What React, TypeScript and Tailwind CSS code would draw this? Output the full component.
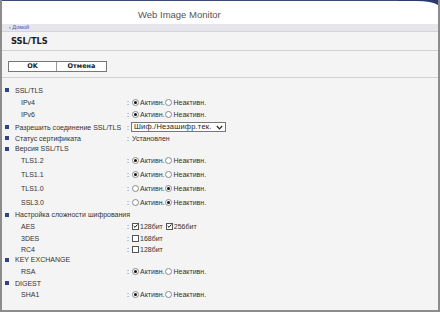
import React from "react";

type Row =
  | { kind: "section"; label: string; h: number }
  | { kind: "radio"; label: string; h: number; on: boolean }
  | { kind: "select"; label: string; h: number }
  | { kind: "text"; label: string; h: number; value: string }
  | { kind: "check"; label: string; h: number; items: { t: string; on: boolean }[] };

const rows: Row[] = [
  { kind: "section", label: "SSL/TLS", h: 12 },
  { kind: "radio", label: "IPv4", h: 12, on: true },
  { kind: "radio", label: "IPv6", h: 13, on: true },
  { kind: "select", label: "Разрешить соединение SSL/TLS", h: 12 },
  { kind: "text", label: "Статус сертификата", h: 10, value: "Установлен" },
  { kind: "section", label: "Версия SSL/TLS", h: 11 },
  { kind: "radio", label: "TLS1.2", h: 13, on: true },
  { kind: "radio", label: "TLS1.1", h: 14, on: true },
  { kind: "radio", label: "TLS1.0", h: 14, on: false },
  { kind: "radio", label: "SSL3.0", h: 14, on: false },
  { kind: "section", label: "Настройка сложности шифрования", h: 11 },
  { kind: "check", label: "AES", h: 12, items: [{ t: "128бит", on: true }, { t: "256бит", on: true }] },
  { kind: "check", label: "3DES", h: 12, items: [{ t: "168бит", on: false }] },
  { kind: "check", label: "RC4", h: 10, items: [{ t: "128бит", on: false }] },
  { kind: "section", label: "KEY EXCHANGE", h: 11 },
  { kind: "radio", label: "RSA", h: 12, on: true },
  { kind: "section", label: "DIGEST", h: 12 },
  { kind: "radio", label: "SHA1", h: 11, on: true },
];

function Radio({ on }: { on: boolean }) {
  return (
    <span className="w-[7px] h-[7px] rounded-full border border-[#8a8a8a] bg-white flex items-center justify-center shrink-0">
      {on && <span className="w-[3px] h-[3px] rounded-full bg-[#111]" />}
    </span>
  );
}

function Check({ on }: { on: boolean }) {
  return (
    <span className="w-[7px] h-[7px] border border-[#555] bg-white flex items-center justify-center shrink-0">
      {on && (
        <svg width="6" height="6" viewBox="0 0 6 6">
          <path d="M0.8 3 L2.4 4.6 L5.3 1.2" stroke="#111" strokeWidth="1.2" fill="none" />
        </svg>
      )}
    </span>
  );
}

function Value({ row }: { row: Row }) {
  if (row.kind === "radio") {
    return (
      <div className="flex items-center">
        <Radio on={row.on} />
        <span className="ml-[1px]">Активн.</span>
        <span className="ml-[1px]" />
        <Radio on={!row.on} />
        <span className="ml-[1px]">Неактивн.</span>
      </div>
    );
  }
  if (row.kind === "select") {
    return (
      <div className="ml-[-1px] w-[95px] h-[10px] border border-[#777] bg-white flex items-center justify-between pl-[2px] pr-[2px] text-[7.5px] tracking-[0.2px] text-[#222]">
        <span>Шиф./Незашифр.тек.</span>
        <svg width="7" height="5" viewBox="0 0 7 5">
          <path d="M0.8 1 L3.5 3.8 L6.2 1" stroke="#222" strokeWidth="1.2" fill="none" />
        </svg>
      </div>
    );
  }
  if (row.kind === "text") {
    return <span>{row.value}</span>;
  }
  if (row.kind === "check") {
    return (
      <div className="flex items-center gap-[3px]">
        {row.items.map((it, i) => (
          <div key={i} className="flex items-center gap-[1px]">
            <Check on={it.on} />
            <span>{it.t}</span>
          </div>
        ))}
      </div>
    );
  }
  return null;
}

export default function App() {
  return (
    <div
      className="w-[440px] h-[312px] bg-[#f4f4f4] border-l-2 border-r-2 border-b-2 border-[#8c8c8c] text-[#333] overflow-hidden relative"
      style={{ fontFamily: '"Liberation Sans", Arial, sans-serif' }}
    >
      <svg className="absolute top-0 right-0" width="40" height="6" viewBox="0 0 40 6">
        <path d="M0 0 L40 0 L40 5 Q34 1 18 1 L0 1 Z" fill="#2b3a6e" />
      </svg>
      <div className="h-[24px] bg-white border-t border-[#3d4b78] flex items-center pl-[136px]">
        <span className="text-[9.5px] text-[#555] mt-[5px]">Web Image Monitor</span>
      </div>
      <div className="h-[8px] bg-[#e5e5eb] border-b border-[#d4d4da] flex items-center pl-[7px] text-[5.5px] text-[#3a5bb0] leading-none">
        ‹ Домой
      </div>
      <div className="h-[19px] border-b border-[#d2d2d2] flex items-center pl-[9px]">
        <span className="text-[8.3px] font-bold text-[#222]" style={{ fontFamily: '"DejaVu Sans", Verdana, sans-serif' }}>
          SSL/TLS
        </span>
      </div>
      <div className="h-[27px] border-b border-[#d2d2d2] flex items-center pl-[6px] pt-[5px]">
        <div className="flex h-[11px] border border-[#777] bg-white text-[6.5px] font-bold text-[#222]" style={{ fontFamily: '"DejaVu Sans", Verdana, sans-serif' }}>
          <div className="w-[48px] flex items-center justify-center border-r border-[#999]">OK</div>
          <div className="w-[49px] flex items-center justify-center">Отмена</div>
        </div>
      </div>
      <div className="pt-[6px] text-[7px] leading-none">
        {rows.map((r, i) => (
          <div key={i} className="flex items-center" style={{ height: r.h }}>
            {r.kind === "section" ? (
              <div className="flex items-center pl-[3px]">
                <span className="w-[4px] h-[4px] bg-[#2d4485] mr-[6px]" />
                <span>{r.label}</span>
              </div>
            ) : (
              <>
                <div className="w-[125px] shrink-0 flex items-center">
                  {r.kind === "select" || r.kind === "text" ? (
                    <div className="flex items-center pl-[3px]">
                      <span className="w-[4px] h-[4px] bg-[#2d4485] mr-[6px]" />
                      <span>{r.label}</span>
                    </div>
                  ) : (
                    <span className="pl-[19px]">{r.label}</span>
                  )}
                </div>
                <span className="w-[5px] shrink-0">:</span>
                <Value row={r} />
              </>
            )}
          </div>
        ))}
      </div>
    </div>
  );
}
